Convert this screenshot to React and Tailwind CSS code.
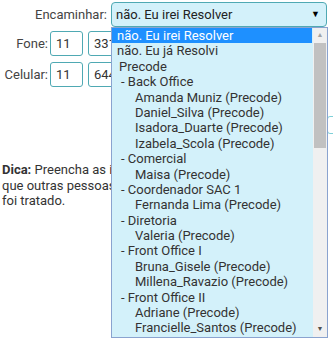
import React from "react";

const options = [
  { label: "não. Eu irei Resolver", pad: "pl-[5px]", selected: true },
  { label: "não. Eu já Resolvi", pad: "pl-[5px]" },
  { label: "Precode", pad: "pl-[7px]" },
  { label: "- Back Office", pad: "pl-[9px]" },
  { label: "Amanda Muniz (Precode)", pad: "pl-[23px]" },
  { label: "Daniel_Silva (Precode)", pad: "pl-[23px]" },
  { label: "Isadora_Duarte (Precode)", pad: "pl-[23px]" },
  { label: "Izabela_Scola (Precode)", pad: "pl-[23px]" },
  { label: "- Comercial", pad: "pl-[9px]" },
  { label: "Maisa (Precode)", pad: "pl-[23px]" },
  { label: "- Coordenador SAC 1", pad: "pl-[9px]" },
  { label: "Fernanda Lima (Precode)", pad: "pl-[23px]" },
  { label: "- Diretoria", pad: "pl-[9px]" },
  { label: "Valeria (Precode)", pad: "pl-[23px]" },
  { label: "- Front Office I", pad: "pl-[9px]" },
  { label: "Bruna_Gisele (Precode)", pad: "pl-[23px]" },
  { label: "Millena_Ravazio (Precode)", pad: "pl-[23px]" },
  { label: "- Front Office II", pad: "pl-[9px]" },
  { label: "Adriane (Precode)", pad: "pl-[23px]" },
  { label: "Francielle_Santos (Precode)", pad: "pl-[23px]" },
];

function Field({ value, width }) {
  return (
    <div
      className={`h-[25px] ${width} border border-[#4fa9b3] rounded-[3px] bg-white flex items-center px-[5px] text-[13px] text-[#333]`}
    >
      {value}
    </div>
  );
}

export default function App() {
  return (
    <div
      className="relative w-[333px] h-[344px] bg-white overflow-hidden text-[#333]"
      style={{ fontFamily: "Roboto, 'Noto Sans', sans-serif" }}
    >
      <div className="flex items-center pt-[2px] h-[27px]">
        <span className="w-[108px] text-right text-[13px] pr-[1px] text-[#444]">
          Encaminhar:
        </span>
        <div className="ml-[3px] w-[216px] h-[25px] border border-[#4fa9b3] rounded-[4px] bg-[#d3f1fa] flex items-center justify-between pl-[4px] pr-[6px] text-[13px] text-[#222]">
          <span>não. Eu irei Resolver</span>
          <span className="text-[9px] text-black">▼</span>
        </div>
      </div>

      <div className="flex items-center gap-[2px] mt-[4px]">
        <span className="w-[48px] text-right text-[13px] text-[#444]">Fone:</span>
        <Field value="11" width="w-[33px]" />
        <div className="ml-[3px]">
          <Field value="3312" width="w-[60px]" />
        </div>
      </div>

      <div className="flex items-center gap-[2px] mt-[6px]">
        <span className="w-[48px] text-right text-[13px] text-[#444]">Celular:</span>
        <Field value="11" width="w-[33px]" />
        <div className="ml-[3px]">
          <Field value="6442" width="w-[60px]" />
        </div>
      </div>

      <div className="w-[20px] h-[18px] border border-[#7fd0d8] rounded-[3px] absolute right-[-14px] top-[116px]" />

      <p className="mt-[75px] pl-[2px] w-[300px] overflow-hidden whitespace-nowrap text-[13px] leading-[15.5px] text-[#333]">
        <strong className="font-bold">Dica:</strong> Preencha as informações sobre o atendimento
        <br />
        que outras pessoas identifiquem como o chamado
        <br />
        foi tratado.
      </p>

      <div className="absolute left-[111px] top-[27px] w-[217px] h-[311px] border border-[#8aa3cf] bg-[#d3f1fa] flex">
        <div className="flex-1 flex flex-col overflow-hidden">
          {options.map((o) => (
            <div
              key={o.label}
              className={`h-[15.4px] leading-[15.4px] text-[13px] whitespace-nowrap ${o.pad} ${
                o.selected ? "bg-[#1e90ff] text-white mr-[1px]" : "text-[#333]"
              }`}
            >
              {o.label}
            </div>
          ))}
        </div>
        <div className="w-[14px] bg-[#f0f0f0] flex flex-col items-center">
          <span className="h-[15px] text-[7px] leading-[15px] text-[#a3a3a3]">▲</span>
          <div className="w-[12px] h-[105px] bg-[#c1c1c1]" />
          <div className="flex-1" />
          <span className="h-[15px] text-[7px] leading-[15px] text-[#505050]">▼</span>
        </div>
      </div>
    </div>
  );
}
